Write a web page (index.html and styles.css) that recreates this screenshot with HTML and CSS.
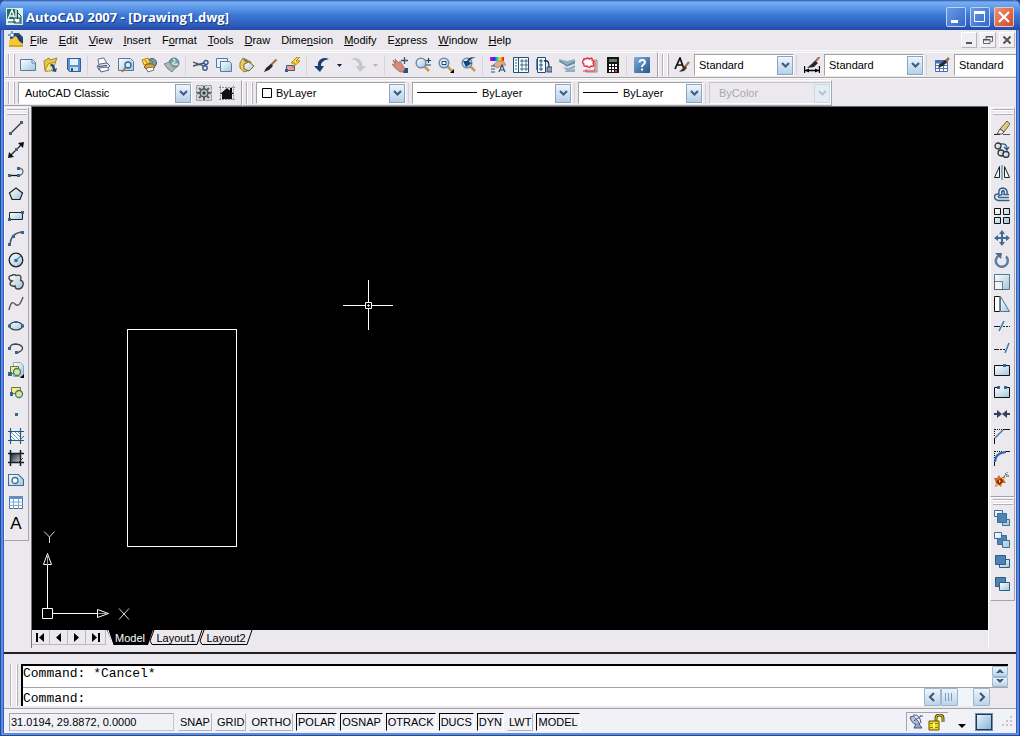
FILE: index.html
```html
<!DOCTYPE html>
<html lang="en">
<head>
<meta charset="utf-8">
<title>AutoCAD 2007 - [Drawing1.dwg]</title>
<link rel="stylesheet" href="styles.css">
</head>
<body>
<svg class="defs" aria-hidden="true">
  <defs>
    <linearGradient id="sky" x1="0" y1="0" x2="1" y2="1"><stop offset="0" stop-color="#fff"/><stop offset="1" stop-color="#9fc6dc"/></linearGradient>
    <linearGradient id="steel" x1="0" y1="0" x2="1" y2="1"><stop offset="0" stop-color="#7db0dc"/><stop offset="1" stop-color="#24548c"/></linearGradient>
    <linearGradient id="shade" x1="0" y1="0" x2="1" y2="1"><stop offset="0" stop-color="#10243c"/><stop offset="1" stop-color="#d8d4c0"/></linearGradient>
    <linearGradient id="rainbow"><stop offset="0" stop-color="#f0e"/><stop offset=".3" stop-color="#22f"/><stop offset=".5" stop-color="#0cc"/><stop offset=".7" stop-color="#ee0"/><stop offset="1" stop-color="#f00"/></linearGradient>
    <symbol id="chev" viewBox="0 0 9 7"><path d="M1 1l3.500 3.500L8 1" fill="none" stroke="currentColor" stroke-width="2.200"/></symbol>
    <symbol id="lens" viewBox="0 0 16 16"><path d="M9 9l5 5" stroke="#c69a50" stroke-width="2.500"/><circle cx="6" cy="6" r="4.800" fill="url(#sky)" stroke="#6b8cae" stroke-width="1.500"/></symbol>
    <symbol id="brush" viewBox="0 0 16 16"><path d="M14.500 2.500L8 9" stroke="#a76c4b" stroke-width="2.200"/><path d="M9 7l2 2-4 4-5 2 2-4z" fill="#26262c"/></symbol>
  </defs>
</svg>
<div class="window">
  <header class="titlebar">
    <svg class="app-icon" width="17" height="17" viewBox="0 0 17 17"><path d="M0 0h17v17H0z" fill="#d9efe9"/><path d="M1 1h10v10H1z" fill="#276c66"/><path d="M2 11l4-9 3 9M4 8h4M10 1v15M1 12.500h15" fill="none" stroke="#fff" stroke-width="1.300"/><path d="M11.500 2v9M2 14h8M8 10h6v5H8zM12 5l3 3v8" fill="none" stroke="#174b4a"/></svg>
    <h1>AutoCAD 2007 - [Drawing1.dwg]</h1>
    <div class="winbtns">
      <button aria-label="Minimize"><svg width="18" height="18"><path d="M4 12h7v3H4z" fill="#fff"/></svg></button>
      <button aria-label="Maximize"><svg width="18" height="18"><path d="M3.500 4.500h10v9h-10z" fill="none" stroke="#fff"/><path d="M3 3h11v3H3z" fill="#fff"/></svg></button>
      <button class="close" aria-label="Close"><svg width="18" height="18"><path d="M4 4l10 10M14 4L4 14" stroke="#fff" stroke-width="2.200"/></svg></button>
    </div>
  </header>

  <nav class="menubar">
    <svg class="doc-icon" width="16" height="17" viewBox="0 0 16 17"><path d="M2 2h9l4 4v4H2z" fill="#2f5186"/><path d="M1 16V9l7-4 7 8v3z" fill="#f0c934"/><path d="M8 4h3l4 5v4l-4-3z" fill="#223b6d"/><path d="M1 14h14v2H1z" fill="#d8a722"/><path d="M4 0v8M0 4h8" stroke="#23457a"/><path d="M2.500 2.500h3v3h-3z" fill="#fff" stroke="#7faadd"/></svg>
    <button><u>F</u>ile</button><button><u>E</u>dit</button><button><u>V</u>iew</button><button><u>I</u>nsert</button><button>F<u>o</u>rmat</button><button><u>T</u>ools</button><button><u>D</u>raw</button><button>Dime<u>n</u>sion</button><button><u>M</u>odify</button><button>E<u>x</u>press</button><button><u>W</u>indow</button><button><u>H</u>elp</button>
    <div class="mdibtns">
      <button aria-label="Minimize drawing"><svg width="14" height="14"><path d="M4 9h6v2H4z" fill="#555"/></svg></button>
      <button aria-label="Restore drawing"><svg width="14" height="14"><path d="M5 6V3.500h6.500v5H10M2.500 6.500H9v4H2.500z" fill="none" stroke="#666"/><path d="M5 3h7v1.500H5zM2 6h7v1.500H2z" fill="#555"/></svg></button>
      <button aria-label="Close drawing"><svg width="14" height="14"><path d="M3.500 3.500l7 7M10.500 3.500l-7 7" stroke="#555" stroke-width="2"/></svg></button>
    </div>
  </nav>

  <div class="toolrow">
    <div class="bar standard" role="toolbar" aria-label="Standard">
      <i class="grip"></i>
      <button aria-label="New"><svg viewBox="0 0 16 16"><path d="M.500 2.500h12l3 3v8H.500z" fill="url(#sky)" stroke="#527ca5"/><path d="M12 2.500V6h3.500" fill="#fff" stroke="#527ca5"/></svg></button>
      <button aria-label="Open"><svg viewBox="0 0 16 16"><path d="M1 4l5-3 1 2 7-2-2 5-7 8H2z" fill="#e9c64a" stroke="#a98527"/><path d="M5 7l8-2-5 9H2z" fill="#f8e78c" stroke="#b08e30"/><path d="M8 7c3 0 4 2 4 5l2-1-1 4-5-1 2-1c0-3-1-4-3-4z" fill="#224c7d"/></svg></button>
      <button aria-label="Save"><svg viewBox="0 0 16 16"><path d="M1.500 1.500h13v13h-11l-2-2z" fill="#5d93c9" stroke="#2b5f99"/><path d="M4 2h8v6H4z" fill="#e6f2fa"/><path d="M4 10h8v4H4z" fill="#c9dff0"/><path d="M5 11h2v3H5z" fill="#24517f"/></svg></button>
      <i class="sep"></i>
      <button aria-label="Plot"><svg viewBox="0 0 16 16"><path d="M4 8L3 2l6-1 3 6" fill="#fff" stroke="#60729d"/><path d="M2 9l3-2 7-1 3 3-3 3-8 1z" fill="#dfe6f4" stroke="#59658a"/><path d="M4 11l8-1 2 3-8 2z" fill="#fff" stroke="#59658a"/><path d="M3 9.500l9-1" stroke="#39446b"/></svg></button>
      <button aria-label="Plot Preview"><svg viewBox="0 0 16 16"><path d="M.500 1.500h12l3 3v9H.500z" fill="url(#sky)" stroke="#527ca5"/><path d="M8 10l-4 5" stroke="#a37943" stroke-width="2"/><circle cx="10" cy="8" r="3" fill="#d5ecf8" stroke="#3a6993" stroke-width="1.400"/></svg></button>
      <button aria-label="Publish"><svg viewBox="0 0 16 16"><circle cx="11" cy="6" r="4.500" fill="#6ca0ba" stroke="#376179"/><path d="M1 3l6-2 2 5-6 2z" fill="#ffe04a" stroke="#a8821b"/><path d="M3 10l3-3h6l2 3-3 3H6z" fill="#e4a735" stroke="#7d5b1c"/><path d="M5 11l7-1 1 3-6 2z" fill="#fff" stroke="#776"/><path d="M4 3l2 3M9 2l3 4" stroke="#d14c1e"/></svg></button>
      <button aria-label="3DDWF"><svg viewBox="0 0 16 16"><circle cx="10" cy="6" r="5" fill="#6f9fae" stroke="#557e91"/><path d="M9 2c3 1 2 3 0 4s3 2 5 1" stroke="#d6e6c8" stroke-width="1.500" fill="none"/><path d="M0 7l5-2 4 5 3 0-4 5-4-3z" fill="#aeb4b8" stroke="#7c888f"/></svg></button>
      <i class="sep"></i>
      <button aria-label="Cut"><svg viewBox="0 0 16 16"><path d="M0 5l11 4M0 9l11-3" stroke="#444a60" stroke-width="1.300"/><circle cx="13" cy="5.500" r="2" fill="none" stroke="#345a91" stroke-width="1.400"/><circle cx="12" cy="11" r="2.200" fill="none" stroke="#345a91" stroke-width="1.400"/></svg></button>
      <button aria-label="Copy"><svg viewBox="0 0 16 16"><path d="M.500 1.500h11v9H.500z" fill="#e5f3fa" stroke="#527ca5"/><path d="M4.500 4.500h9l2 2v8h-11z" fill="url(#sky)" stroke="#527ca5"/></svg></button>
      <button aria-label="Paste"><svg viewBox="0 0 16 16"><path d="M1 6l3-5 8 4-1 8-6 2-4-4z" fill="#e9cf62" stroke="#9c7b27"/><path d="M4 2h3l3 3H6z" fill="#777"/><path d="M5 7l5-2 5 4-5 5-5-2z" fill="url(#sky)" stroke="#80631d"/></svg></button>
      <button aria-label="Match Properties"><svg><use href="#brush"/></svg></button>
      <button aria-label="Block Editor"><svg viewBox="0 0 16 16"><path d="M1.500 8.500h8v5h-8z" fill="#f0a08a" stroke="#315d8d"/><path d="M12 0L6 6h4l-3 5 8-7h-4l4-4z" fill="#ffdf38" stroke="#a8821b"/><path d="M0 12h3v3H0z" fill="#2d609b"/></svg></button>
      <i class="sep"></i>
      <button aria-label="Undo"><svg viewBox="0 0 16 16"><path d="M15 2C8-1 3 4 4 9H0l6 6 4-6H7c0-4 3-6 8-7z" fill="#193e70"/></svg></button>
      <button class="drop" aria-label="Undo list"><svg viewBox="0 0 5 3"><path d="M0 0h5L2.500 3z" fill="#111b45"/></svg></button>
      <button aria-label="Redo"><svg viewBox="0 0 16 16"><path d="M1 2c7-3 12 2 11 7h4l-6 6-4-6h3c0-4-3-6-8-7z" fill="#c5c6cb"/></svg></button>
      <button class="drop" aria-label="Redo list"><svg viewBox="0 0 5 3"><path d="M0 0h5L2.500 3z" fill="#b6b5ba"/></svg></button>
      <i class="sep"></i>
      <button aria-label="Pan"><svg viewBox="0 0 16 16"><path d="M1 3l3 3-1-4 4 4 1-2 5 8-2 3H8L3 11 0 7l3 1z" fill="#d58c7e" stroke="#a25d56" stroke-width=".700"/><path d="M12.500 0v7M9 3.500h7" stroke="#34577f" stroke-width="1.300"/><path d="M13 11h3v5h-5z" fill="#27527f"/></svg></button>
      <button aria-label="Zoom Realtime"><svg viewBox="0 0 16 16"><use href="#lens"/><path d="M13.500 1v5M11 3.500h5M11 8h5" stroke="#193d70" stroke-width="1.200"/></svg></button>
      <button aria-label="Zoom Window"><svg viewBox="0 0 16 16"><use href="#lens"/><path d="M4 4.500h4v3H4z" fill="#fff" stroke="#1e4678"/><path d="M16 12v4h-4z" fill="#000"/></svg></button>
      <button aria-label="Zoom Previous"><svg viewBox="0 0 16 16"><use href="#lens"/><path d="M15 1C9-1 7 2 6 4L2 4l3 6 6-4-3-1c1-3 3-4 7-4z" fill="#1c426f"/></svg></button>
      <i class="sep"></i>
      <button aria-label="Properties"><svg viewBox="0 0 16 16"><path d="M0 0h14v4H0z" fill="url(#rainbow)"/><path d="M3 8l5-4 6 1 2 3-5 1-4 2z" fill="#e6a78e" stroke="#99604b" stroke-width=".600"/><path d="M1 9h4M1 12h4M1 15h4M9 15l3-7 3 7M10 13h4" fill="none" stroke="#31517b" stroke-width="1.200"/></svg></button>
      <button aria-label="DesignCenter"><svg viewBox="0 0 16 16"><path d="M.500.500h15v15H.500z" fill="#f5fafc" stroke="#244e78"/><path d="M5.500 0v16" stroke="#244e78"/><path d="M2 3h2M2 6h2M2 9h2M2 12h2" stroke="#2a6f91"/><path d="M8 3h2v2H8zM12 3h2v2h-2zM8 7h2v2H8zM12 7h2v2h-2zM8 11h2v2H8zM12 11h2v2h-2z" fill="#cfe4dd" stroke="#335b78" stroke-width=".800"/></svg></button>
      <button aria-label="Tool Palettes"><svg viewBox="0 0 16 16"><path d="M1.500.500h8v15h-8z" fill="#f5fafc" stroke="#244e78"/><path d="M0 2v11" stroke="#5588b5" stroke-width="2"/><path d="M4 3h2v2H4zM4 7h2v2H4zM4 11h2v2H4z" fill="#cfe4dd" stroke="#335b78"/><path d="M8 4c4-1 5 1 5 6" fill="none" stroke="#222d48" stroke-width="1.300"/><path d="M11 10h5v5h-5z" fill="#8da0b8" stroke="#3c4c66"/></svg></button>
      <button aria-label="Sheet Set Manager"><svg viewBox="0 0 16 16"><path d="M0 2l8 2 8-2v5l-7 2-9-4zM4 10l5 1 7-3v3l-8 3zM5 14l11-2v3H7z" fill="#92afbe"/><path d="M1 4l7 5 8-4" fill="none" stroke="#5c869b" stroke-width="1.500"/></svg></button>
      <button aria-label="Markup Set Manager"><svg viewBox="0 0 16 16"><path d="M4 3h11v12H4z" fill="#e4dede" stroke="#8b8992"/><path d="M1 1h11v11H1z" fill="#f8eeee"/><path d="M4 2q2-2 3 0 4-2 3 1 3 1 1 3 2 4-2 3-2 3-4 0-4 1-3-2-3-2 0-4-1-2 2-1z" fill="#fff" stroke="#df3045" stroke-width="1.400"/><path d="M1 14h12V4" fill="none" stroke="#cf3e50"/></svg></button>
      <button aria-label="QuickCalc"><svg viewBox="0 0 16 16"><path d="M2 0h12v16H2z" fill="#171414"/><path d="M4 2h8v3H4z" fill="#5e7b68"/><path d="M4 7h2v2H4zM7 7h2v2H7zM10 7h2v2h-2zM4 10h2v2H4zM7 10h2v2H7zM10 10h2v2h-2zM4 13h2v2H4zM7 13h2v2H7z" fill="#fff"/><path d="M10 13h2v2h-2z" fill="#c44"/></svg></button>
      <i class="sep"></i>
      <button aria-label="Help"><svg viewBox="0 0 16 16"><rect width="16" height="16" rx="1" fill="url(#steel)"/><path d="M5.500 5.500q0-2.500 2.700-2.500t2.700 2.300q0 1.200-1.500 2.200Q8 8.300 8 10M8 11.500v2" fill="none" stroke="#fff" stroke-width="2"/></svg></button>
    </div>
    <div class="bar open" role="toolbar" aria-label="Styles">
      <i class="grip"></i>
      <label class="lead" for="textstyle"><svg viewBox="0 0 16 16"><path d="M1 12L6 1l4 11M3 8h6" fill="none" stroke="#111" stroke-width="1.700"/><path d="M15 5l-5 6" stroke="#a76c4b" stroke-width="2"/><path d="M11 9l2 2-3 3-5 1 3-3z" fill="#333"/></svg></label>
      <span class="combo w-style"><select id="textstyle"><option>Standard</option></select><span class="arrow"><svg><use href="#chev"/></svg></span></span>
      <i class="sep"></i>
      <label class="lead" for="dimstyle"><svg viewBox="0 0 16 16"><path d="M15.500 0L10 6" stroke="#a76c4b" stroke-width="2.200"/><path d="M11 4l3 2-4 4-7 1z" fill="#26262c"/><path d="M.500 9v7M15.500 9v7M1 13.500h14" stroke="#000" stroke-width="1.300"/><path d="M1 13.500l4-2v4zM15 13.500l-4-2v4z"/></svg></label>
      <span class="combo w-style"><select id="dimstyle"><option>Standard</option></select><span class="arrow"><svg><use href="#chev"/></svg></span></span>
      <i class="sep"></i>
      <label class="lead" for="tablestyle"><svg viewBox="0 0 16 16"><path d="M1.500 3.500h12v11h-12z" fill="#fff" stroke="#4670b0"/><path d="M1 5h13" stroke="#4670b0" stroke-width="3"/><path d="M1 8.500h13M1 11.500h13M5.500 4v11M9.500 4v11" stroke="#4670b0"/><path d="M15 1l-4 4" stroke="#a76c4b" stroke-width="2.500"/><path d="M11 3l2 2-4 4-5 2 2-4z" fill="#26262c"/></svg></label>
      <span class="combo cut"><select id="tablestyle"><option>Standard</option></select></span>
    </div>
  </div>

  <div class="toolrow second">
    <div class="bar workspaces" role="toolbar" aria-label="Workspaces">
      <i class="grip"></i>
      <span class="combo w-space"><select aria-label="Workspace"><option>AutoCAD Classic</option></select><span class="arrow"><svg><use href="#chev"/></svg></span></span>
      <button aria-label="Workspace Settings"><svg viewBox="0 0 16 16"><path d="M.500.500h15v15H.500z" fill="#d4d6d6" stroke="#8b9091" stroke-dasharray="3 1"/><path d="M8 1v14M1 8h14M3 3l10 10M13 3L3 13" stroke="#5c6464" stroke-width="2"/><circle cx="8" cy="8" r="4" fill="#aeb6b6" stroke="#4f5959" stroke-width="1.500"/><circle cx="8" cy="8" r="1.500" fill="#303a3a"/></svg></button>
      <button aria-label="My Workspace"><svg viewBox="0 0 16 16"><path d="M1.500.500v15M14.500.500v15M0 2.500h16M0 14.500h16" stroke="#8c8c90" stroke-dasharray="2 1"/><path d="M1 9l7-6 7 6h-2v5H3V9z" fill="#111"/><path d="M11 3h2v4h-2z"/></svg></button>
    </div>
    <div class="bar" role="toolbar" aria-label="Properties">
      <i class="grip"></i>
      <span class="combo w-color"><svg class="swatch" width="10" height="10"><path d="M.500.500h9v9h-9z" fill="#fff" stroke="#000"/></svg><select class="after-swatch" aria-label="Color"><option>ByLayer</option></select><span class="arrow"><svg><use href="#chev"/></svg></span></span>
      <i class="sep"></i>
      <span class="combo w-linetype"><i class="stroke long"></i><select class="after-long" aria-label="Linetype"><option>ByLayer</option></select><span class="arrow"><svg><use href="#chev"/></svg></span></span>
      <i class="sep"></i>
      <span class="combo w-weight"><i class="stroke"></i><select class="after-line" aria-label="Lineweight"><option>ByLayer</option></select><span class="arrow"><svg><use href="#chev"/></svg></span></span>
      <i class="sep"></i>
      <span class="combo w-plot off"><select aria-label="Plot style" disabled><option>ByColor</option></select><span class="arrow"><svg><use href="#chev"/></svg></span></span>
    </div>
  </div>

  <main class="work">
    <aside class="side">
      <div class="vbar" role="toolbar" aria-label="Draw">
        <i class="hgrip"></i>
        <button aria-label="Line"><svg viewBox="0 0 16 16"><path d="M2 14L14 2" stroke="#333" stroke-width="1.300"/><path d="M1 12h3v3H1zM12 1h3v3h-3z" fill="#2e6892"/></svg></button>
        <button aria-label="Construction Line"><svg viewBox="0 0 16 16"><path d="M2 14L14 2" stroke="#222" stroke-width="1.300"/><path d="M0 16l1-6 5 5zM16 0l-1 6-5-5z" fill="#111"/><path d="M7 6h3v3H7z" fill="#2e6892"/></svg></button>
        <button aria-label="Polyline"><svg viewBox="0 0 16 16"><path d="M1 11.500h10q4-1 4-4T10 4" fill="none" stroke="#777" stroke-width="1.400"/><path d="M1 11.500h10" stroke="#111"/><path d="M0 10h3v3H0zM9 10h3v3H9zM9 3h3v3H9z" fill="#2e6892"/></svg></button>
        <button aria-label="Polygon"><svg viewBox="0 0 16 16"><path d="M8 2l6.500 5L12 13.500H4L1.500 7z" fill="url(#sky)" stroke="#222" stroke-width="1.200"/></svg></button>
        <button aria-label="Rectangle"><svg viewBox="0 0 16 16"><path d="M1.500 4.500h13v7h-13z" fill="url(#sky)" stroke="#222"/><path d="M0 10h3v3H0zM13 3h3v3h-3z" fill="#2e6892"/></svg></button>
        <button aria-label="Arc"><svg viewBox="0 0 16 16"><path d="M2 14Q3 3 14 2" fill="none" stroke="#555" stroke-width="1.400"/><path d="M0 13h3v3H0zM4 5h3v3H4zM13 1h3v3h-3z" fill="#2e6892"/></svg></button>
        <button aria-label="Circle"><svg viewBox="0 0 16 16"><circle cx="8" cy="8" r="6.800" fill="url(#sky)" stroke="#222" stroke-width="1.300"/><path d="M8 8l5-4" stroke="#28608b"/><path d="M6.500 7h3v3h-3z" fill="#2e6892"/></svg></button>
        <button aria-label="Revision Cloud"><svg viewBox="0 0 16 16"><path d="M4 7C0 6 0 1 4 1.500q2-2 4 0Q13 0 13 4q0 2-1 2 4 1 3 5-1 4-5 4-3 0-3-3-4 1-5-2 0-2 2-3z" fill="url(#sky)" stroke="#444" stroke-width="1.400"/></svg></button>
        <button aria-label="Spline"><svg viewBox="0 0 16 16"><path d="M1 14C3 5 5 6 7 8c4 4 6-2 8-7" fill="none" stroke="#555" stroke-width="1.400"/></svg></button>
        <button aria-label="Ellipse"><svg viewBox="0 0 16 16"><ellipse cx="8" cy="8" rx="6.500" ry="4" fill="url(#sky)" stroke="#333" stroke-width="1.200"/><path d="M0 6.500h3v3H0zM13 6.500h3v3h-3zM6.500 3h3v2h-3z" fill="#2e6892"/></svg></button>
        <button aria-label="Ellipse Arc"><svg viewBox="0 0 16 16"><path d="M2 8q0-4 6-4 7 1 6.500 5Q13 12 8 13" fill="none" stroke="#444" stroke-width="1.300"/><path d="M0 7h3v3H0zM7 11h3v3H7z" fill="#2e6892"/></svg></button>
        <button aria-label="Insert Block"><svg viewBox="0 0 16 16"><path d="M5.500.500h7l3 3v11h-10z" fill="url(#sky)" stroke="#8ba9bc"/><path d="M2.500 4.500h8v7h-8z" fill="#f5eb8d" stroke="#6c7346"/><circle cx="9" cy="10" r="3.500" fill="#d7e693" stroke="#4c7770" stroke-width="1.300"/><path d="M0 10h4v4H0z" fill="#2e6892"/><path d="M16 12v4h-4z"/></svg></button>
        <button aria-label="Make Block"><svg viewBox="0 0 16 16"><path d="M3.500 3.500h9v6h-9z" fill="#f5eb8d" stroke="#6c7346"/><circle cx="11" cy="10" r="3.500" fill="#d7e693" stroke="#4c7770" stroke-width="1.300"/><path d="M2 8h3v4H2z" fill="#2e6892"/></svg></button>
        <button aria-label="Point"><svg viewBox="0 0 16 16"><path d="M7 7h3v3H7z" fill="#35678f"/></svg></button>
        <button aria-label="Hatch"><svg viewBox="0 0 16 16"><path d="M3 3h10v10H3z" fill="#fff"/><path d="M3 4l9 9M6 3l7 7M9 3l4 4M3 8l5 5M3 11l2 2" stroke="#58a1bf"/><path d="M2.500 0v16M12.500 0v16M0 3.500h16M0 12.500h16" stroke="#285879" stroke-width="1.200"/><path d="M11 13l5-5" stroke="#35678f"/></svg></button>
        <button aria-label="Gradient"><svg viewBox="0 0 16 16"><path d="M3 3h10v10H3z" fill="url(#shade)"/><path d="M2.500 0v16M12.500 0v16M0 3.500h16M0 12.500h16" stroke="#101d2b" stroke-width="1.500"/><path d="M10 13l5-5" stroke="#333"/></svg></button>
        <button aria-label="Region"><svg viewBox="0 0 16 16"><path d="M.500 2.500h10l5 5v6H.500z" fill="url(#sky)" stroke="#3d7098" stroke-width="1.200"/><circle cx="7" cy="8.500" r="3" fill="#fff" stroke="#427297" stroke-width="1.300"/></svg></button>
        <button aria-label="Table"><svg viewBox="0 0 16 16"><path d="M1.500 2.500h13v12h-13z" fill="#fff" stroke="#416fa7"/><path d="M1 3.500h14" stroke="#5b91c8" stroke-width="3"/><path d="M1 8h14M1 11.500h14M5.500 4v11M10.500 4v11" stroke="#7da7d3"/></svg></button>
        <button class="letter" aria-label="Multiline Text">A</button>
      </div>
    </aside>

    <section class="drawing">
      <div class="canvas">
        <div class="shape"></div>
        <svg class="cross" width="51" height="51"><path d="M25.500 0v22M25.500 29v21M0 25.500h22M29 25.500h21" stroke="#fff"/><path d="M22.500 22.500h6v6h-6z" fill="none" stroke="#fff"/><path d="M25.500 24v3M24 25.500h3" stroke="#ccc"/></svg>
        <svg class="ucs" width="100" height="106" fill="none" stroke="#fff"><path d="M10.500 84.500h10v10h-10zM15.500 84V41M21 89.500h44"/><path d="M15.500 29.500l4 11h-8zM76.500 89.500l-11-4v8z"/><path d="M15.500 32v9M66 89.500h8" stroke="#999"/><path d="M12 7.500l5.500 5.500 5-5.500M17.500 13v6M87 84.500l10 11M97 84.500l-10 11" stroke="#ddd"/></svg>
      </div>
      <div class="tabs">
        <div class="tabnav">
          <button aria-label="First"><svg width="9" height="9"><path d="M1 0v9" stroke="#000" stroke-width="2"/><path d="M8 0v9L3 4.500z"/></svg></button>
          <button aria-label="Previous"><svg width="9" height="9"><path d="M7 0v9L2 4.500z"/></svg></button>
          <button aria-label="Next"><svg width="9" height="9"><path d="M2 0v9l5-4.500z"/></svg></button>
          <button aria-label="Last"><svg width="9" height="9"><path d="M1 0v9l5-4.500z"/><path d="M8 0v9" stroke="#000" stroke-width="2"/></svg></button>
        </div>
        <button class="tab active"><svg viewBox="0 0 46 15" preserveAspectRatio="none"><path d="M0 0h46l-5 15H6z"/><path d="M1 0l5 15" stroke="#fff"/></svg><span>Model</span></button>
        <button class="tab"><svg viewBox="0 0 54 15" preserveAspectRatio="none"><path d="M5 0L1 11l2 3.500h45L53 0" fill="#ebe9ed" stroke="#000"/></svg><span>Layout1</span></button>
        <button class="tab"><svg viewBox="0 0 54 15" preserveAspectRatio="none"><path d="M5 0L1 11l2 3.500h45L53 0" fill="#ebe9ed" stroke="#000"/></svg><span>Layout2</span></button>
      </div>
    </section>

    <aside class="side right">
      <div class="vbar" role="toolbar" aria-label="Modify">
        <i class="hgrip"></i>
        <button aria-label="Erase"><svg viewBox="0 0 16 16"><path d="M0 14.500h6" stroke="#222"/><path d="M6 9l7-8 3 3-6 8z" fill="#d9c88d" stroke="#7b6331"/><path d="M6 9l4 3-2 2H3z" fill="#f4f0e4" stroke="#555"/><path d="M9 14.500h7" stroke="#555"/></svg></button>
        <button aria-label="Copy Object"><svg viewBox="0 0 16 16"><circle cx="4" cy="4" r="3" fill="url(#sky)" stroke="#333" stroke-width="1.300"/><circle cx="7" cy="11" r="3" fill="url(#sky)" stroke="#333" stroke-width="1.300"/><circle cx="12" cy="12.500" r="3" fill="url(#sky)" stroke="#333" stroke-width="1.300"/><path d="M7 2q6-1 6 5M10 5l3 3 2-3" fill="none" stroke="#24598a" stroke-width="1.300"/></svg></button>
        <button aria-label="Mirror"><svg viewBox="0 0 16 16"><path d="M8 1v15" stroke="#2475a7"/><path d="M5.500 2.500v11h-5zM10.500 2.500v11h5z" fill="#eef5f8" stroke="#222"/></svg></button>
        <button aria-label="Offset"><svg viewBox="0 0 16 16"><path d="M15.500 14.500H4q-4-1-3.500-4T5 8q-1-6 4-6 5 1 4 6" fill="none" stroke="#315f86" stroke-width="1.400"/><path d="M15 11.500H6q-3 0-1-2l3-1q-1-3 1-4 2 1 1 4h5" fill="none" stroke="#369" stroke-width="1.400"/></svg></button>
        <button aria-label="Array"><svg viewBox="0 0 16 16" fill="url(#sky)" stroke="#111"><path d="M.500.500h6v6h-6zM9.500.500h6v6h-6zM.500 9.500h6v6h-6zM9.500 9.500h6v6h-6z"/></svg></button>
        <button aria-label="Move"><svg viewBox="0 0 16 16"><path d="M8 2v12M2 8h12" stroke="#426b95" stroke-width="2"/><path d="M8 0l3 4H5zM8 16l3-4H5zM0 8l4-3v6zM16 8l-4-3v6z" fill="#426b95"/></svg></button>
        <button aria-label="Rotate"><svg viewBox="0 0 16 16"><path d="M5 3.500a6 6 0 1 0 7 1" fill="none" stroke="#5b7f9e" stroke-width="2.500"/><path d="M1 1h7L7 7z" fill="#496f93"/></svg></button>
        <button aria-label="Scale"><svg viewBox="0 0 16 16"><path d="M.500.500h15v15H.500z" fill="url(#sky)" stroke="#527895"/><path d="M.500 7.500h8v8h-8z" fill="#eef5f8" stroke="#111" stroke-dasharray="1 1"/></svg></button>
        <button aria-label="Stretch"><svg viewBox="0 0 16 16"><path d="M6.500.500l9 15h-9z" fill="url(#sky)" stroke="#4b7795"/><path d="M5.500.500h-5v15h5" fill="#fff" stroke="#111"/><path d="M5.500.500v15" stroke="#111" stroke-dasharray="1 1"/></svg></button>
        <button aria-label="Trim"><svg viewBox="0 0 16 16"><path d="M0 8.500h6" stroke="#222"/><path d="M9 8.500h7" stroke="#222" stroke-dasharray="2 1"/><path d="M5 13l5-10" stroke="#397aae" stroke-width="1.500"/></svg></button>
        <button aria-label="Extend"><svg viewBox="0 0 16 16"><path d="M0 9.500h5" stroke="#222"/><path d="M6 9.500h6" stroke="#222" stroke-dasharray="2 1"/><path d="M11 13l4-10" stroke="#397aae" stroke-width="1.500"/></svg></button>
        <button aria-label="Break at Point"><svg viewBox="0 0 16 16"><path d="M.500 3.500h15v10H.500z" fill="url(#sky)" stroke="#111"/><path d="M9 2h3v3H9z" fill="#35678f"/></svg></button>
        <button aria-label="Break"><svg viewBox="0 0 16 16"><path d="M.500 3.500h15v10H.500z" fill="url(#sky)"/><path d="M4 3.500H.500v10h15v-10H12" fill="none" stroke="#111"/><path d="M3 2h3v3H3zM10 2h3v3h-3z" fill="#35678f"/></svg></button>
        <button aria-label="Join"><svg viewBox="0 0 16 16"><path d="M0 8h5M11 8h5" stroke="#34405a" stroke-width="2"/><path d="M3 4l5 4-5 4zM13 4L8 8l5 4z" fill="#34405a"/></svg></button>
        <button aria-label="Chamfer"><svg viewBox="0 0 16 16"><path d="M.500 10v6M9 1.500h7" stroke="#111"/><path d="M.500 1v8M1 1.500h8" stroke="#111" stroke-dasharray="1 1"/><path d="M1 10l8-8" stroke="#3c78b2" stroke-width="1.500"/></svg></button>
        <button aria-label="Fillet"><svg viewBox="0 0 16 16"><path d="M.500 10v6M11 1.500h5" stroke="#111"/><path d="M.500 1v8M1 1.500h8" stroke="#111" stroke-dasharray="1 1"/><path d="M1 12q0-9 11-10" fill="none" stroke="#2866b6" stroke-width="2"/></svg></button>
        <button aria-label="Explode"><svg viewBox="0 0 16 16"><path d="M0 6l3 0 2-3 2 3 4-2-1 4 2 3-4 0-1 4-2-2-4 2 1-4z" fill="#d46b22"/><path d="M2 9l3-1 3-2 1 4-4 3z" fill="#8b2a18"/><path d="M5 8l2 1-2 2zM8 6l2 0-1 2zM2 12l2 0-1 2z" fill="#ffe75c"/><path d="M9 6l3-4M11 1l4 4M10 4h6M13 0v6" stroke="#555" stroke-dasharray="1 1"/></svg></button>
      </div>
      <div class="vbar" role="toolbar" aria-label="Draw Order">
        <i class="hgrip"></i>
        <button aria-label="Bring to Front"><svg viewBox="0 0 16 16" stroke="#3e6d96"><path d="M.500.500h8v6h-8zM8.500 9.500h7v6h-7z" fill="url(#sky)"/><path d="M3.500 3.500h9v9h-9z" fill="#4e83b5"/></svg></button>
        <button aria-label="Send to Back"><svg viewBox="0 0 16 16" stroke="#3e6d96"><path d="M3.500 3.500h9v9h-9z" fill="#4e83b5"/><path d="M.500.500h7v6h-7zM8.500 8.500h7v7h-7z" fill="url(#sky)"/></svg></button>
        <button aria-label="Bring Above Objects"><svg viewBox="0 0 16 16" stroke="#2f5b84"><path d="M5.500 5.500h10v8h-10z" fill="url(#sky)"/><path d="M1.500 1.500h10v9h-10z" fill="#4e83b5"/></svg></button>
        <button aria-label="Send Under Objects"><svg viewBox="0 0 16 16" stroke="#2f5b84"><path d="M1.500 1.500h10v9h-10z" fill="#4e83b5"/><path d="M5.500 6.500h10v8h-10z" fill="url(#sky)"/></svg></button>
      </div>
    </aside>
  </main>

  <section class="command">
    <i class="grip"></i>
    <div class="console">
      <div class="history"><output>Command: *Cancel*</output>
        <div class="vscroll"><button aria-label="Scroll up"><svg width="8" height="5"><path d="M4 0l4 4H5L4 3 3 4H0z" fill="#43546a"/></svg></button><button aria-label="Scroll down"><svg width="8" height="5"><path d="M4 4l4-4H5L4 1 3 0H0z" fill="#43546a"/></svg></button></div>
      </div>
      <div class="entry"><input aria-label="Command line" value="Command:">
        <div class="hscroll"><button aria-label="Scroll left"><svg width="9" height="10"><path d="M6 1L2 5l4 4" fill="none" stroke="#43546a" stroke-width="2"/></svg></button><button aria-label="Thumb"><svg width="9" height="8"><path d="M.500 0v8M3.500 0v8M6.500 0v8" stroke="#7b9dc0"/></svg></button><i></i><button aria-label="Scroll right"><svg width="9" height="10"><path d="M3 1l4 4-4 4" fill="none" stroke="#43546a" stroke-width="2"/></svg></button></div>
      </div>
    </div>
  </section>

  <footer class="status">
    <span class="coords">31.0194, 29.8872, 0.0000</span>
    <button>SNAP</button><button>GRID</button><button>ORTHO</button><button class="on">POLAR</button><button class="on">OSNAP</button><button class="on">OTRACK</button><button class="on">DUCS</button><button class="on">DYN</button><button>LWT</button><button class="on">MODEL</button>
    <div class="tray">
      <div class="trayicons">
        <svg width="16" height="16" viewBox="0 0 16 16"><path d="M1 3q2 9 10 7L5 2z" fill="#b9c2df" stroke="#46527f"/><path d="M4 1q7-1 8 8" fill="#eef" stroke="#46527f"/><path d="M5 7l7-5M11 2h3M7 10l-2 4h8l-3-4" fill="#9ba7ce" stroke="#46527f"/></svg>
        <svg width="18" height="17" viewBox="0 0 18 17"><path d="M8 8V4q0-3 3.500-3T15 4v4" fill="none" stroke="#5f5600" stroke-width="3"/><path d="M8 8V4q0-3 3.500-3T15 4v4" fill="none" stroke="#e2cb22"/><path d="M1 7h10v9H1z" fill="#f0da1d" stroke="#5c5300"/><path d="M2 9.500h8M2 13.500h8" stroke="#8a7d00"/><path d="M5 9h2v5H5z" fill="#fff17c"/></svg>
      </div>
      <svg class="menuarrow" width="8" height="4"><path d="M0 0h8L4 4z"/></svg>
      <button class="clean" aria-label="Clean Screen"></button>
      <svg width="12" height="12" fill="#c9c4c0"><path d="M8 0h2v2H8zM8 4h2v2H8zM8 8h2v2H8zM4 4h2v2H4zM4 8h2v2H4zM0 8h2v2H0z"/></svg>
    </div>
  </footer>
</div>
</body>
</html>
```
FILE: styles.css
```css
* { box-sizing: border-box; }
body { margin: 0; background: #2b4f9e; color: #000; font: 11px/14px "Liberation Sans", Arial, sans-serif; }
button, input, select { font: inherit; color: inherit; margin: 0; padding: 0; border: 0; background: none; border-radius: 0; }
svg { display: block; flex: none; }
i { display: block; flex: none; }
.defs { position: absolute; width: 0; height: 0; }

.window { display: flex; flex-direction: column; min-height: 100vh; padding: 0 4px 3px; border-radius: 7px 7px 0 0; background: #ebe9ed; box-shadow: inset 1px 0 #244a9c, inset -1px -1px #244a9c, inset 3px 0 #5b8be2, inset -3px -3px #5b8be2, inset 4px 0 #2f5ec4, inset -4px -4px #2f5ec4; }

.titlebar { display: flex; align-items: center; gap: 3px; height: 30px; margin: 0 -4px; padding: 3px 6px 0; border-radius: 7px 7px 0 0; background: linear-gradient(#2b57a8 0, #78aef2 7%, #5f9aea 25%, #3b78d4 50%, #3369c8 70%, #2c58b8 88%, #2349a6); }
h1 { flex: 1; margin: 0; color: #fff; font: bold 13px/18px "Open Sans", "Noto Sans", sans-serif; text-shadow: 1px 1px #17387f; }
.winbtns { display: flex; gap: 4px; }
.winbtns button { width: 20px; height: 20px; border: 1px solid #bcd3f6; border-radius: 2px; background: linear-gradient(135deg, #6b9be6, #3168cb); }
.winbtns .close { border-color: #f0c6ba; background: linear-gradient(135deg, #ee9375, #cf4a26); }

.menubar { display: flex; align-items: center; gap: 1px; height: 20px; padding: 0 1px 1px 4px; }
.menubar > button { padding: 0 5px; line-height: 16px; }
.mdibtns { display: flex; gap: 3px; margin-left: auto; }
.mdibtns button { width: 16px; height: 16px; border: 1px solid; border-color: #fff #b8b6bb #b8b6bb #fff; background: #f1eff2; }

.toolrow { display: flex; height: 28px; padding-top: 1px; border-top: 1px solid #fafafa; overflow: hidden; }
.bar { display: flex; align-items: center; height: 26px; padding-left: 3px; border: 1px solid; border-color: #fafafa #a5a3a8 #a5a3a8 #fafafa; flex: none; }
.bar.standard { padding-right: 4px; }
.bar.workspaces { padding-right: 3px; }
.bar.open { flex: 1; border-right: 0; }
.bar button { display: flex; align-items: center; justify-content: center; width: 23px; height: 22px; }
.bar button svg, .lead svg { width: 16px; height: 16px; }
.bar .drop { width: 13px; }
.bar .drop svg { width: 5px; height: 3px; }
.grip { width: 7px; height: 22px; margin-right: 1px; border: solid #b3b1b6; border-width: 0 1px; box-shadow: inset 1px 0 #fff, inset -1px 0 #fff; }
.sep { width: 6px; height: 20px; background: linear-gradient(90deg, #0000 2px, #d6d4d8 2px, #d6d4d8 3px, #0000 3px); }
.lead { display: flex; justify-content: center; width: 24px; }
.second .grip { margin-right: 3px; }

.combo { position: relative; display: flex; height: 22px; border: 1px solid #a5a3a8; border-right-color: #fff; border-bottom-color: #fff; background: #fff; }
.combo select { width: 100%; height: 20px; padding-left: 4px; appearance: none; background: none; outline: 0; opacity: 1; }
.arrow { position: absolute; top: 1px; right: 0; display: flex; align-items: center; justify-content: center; width: 16px; height: 19px; border: 1px solid #8ba5c0; background: linear-gradient(#eef5fd, #b5d0ea); color: #405d84; pointer-events: none; }
.arrow svg { width: 9px; height: 7px; }
.w-style { width: 100px; }
.cut { flex: 1; border-right: 0; min-width: 60px; }
.w-space { width: 174px; }
.w-space select { padding-left: 6px; }
.w-color { width: 150px; }
.w-linetype { width: 160px; }
.w-weight { width: 125px; }
.w-plot { width: 122px; }
.off { border-color: #c9c7cc #fff #fff #c9c7cc; background: #ebe9ed; color: #aaa8ad; }
.off select { padding-left: 9px; }
.off .arrow { border-color: #c9d9e6; background: #e3edf5; color: #b5c4d4; }
.swatch { position: absolute; left: 5px; top: 5px; }
.combo .after-swatch { padding-left: 19px; }
.combo .after-long { padding-left: 69px; }
.combo .after-line { padding-left: 44px; }
.stroke { position: absolute; left: 4px; top: 9px; width: 35px; height: 1px; background: #000; }
.stroke.long { width: 60px; }

.work { display: flex; flex: 1; min-height: 0; }
.side { flex: none; width: 27px; padding-top: 1px; }
.right { width: 28px; padding-left: 1px; border-left: 1px solid #fff; }
.vbar { width: 25px; padding: 1px 0 5px; border: 1px solid; border-color: #fafafa #a5a3a8 #a5a3a8 #fafafa; }
.hgrip { width: 20px; height: 6px; margin: 0 auto 2px; border: solid #b3b1b6; border-width: 1px 0; box-shadow: inset 0 1px #fff, inset 0 -1px #fff; }
.vbar button { display: flex; align-items: center; justify-content: center; width: 22px; height: 22px; }
.vbar svg { width: 16px; height: 16px; }
.vbar .letter { font: 17px/22px "Liberation Sans", Arial, sans-serif; }

.drawing { display: flex; flex: 1; flex-direction: column; min-width: 0; border-left: 1px solid #77757a; }
.canvas { position: relative; flex: 1; min-height: 440px; border-top: 1px solid #66646a; background: #000; overflow: hidden; }
.shape { position: absolute; left: 95px; top: 222px; width: 110px; height: 218px; border: 1px solid #fff; }
.cross { position: absolute; left: 311px; top: 173px; }
.ucs { position: absolute; left: 0; bottom: 0; }
.tabs { display: flex; height: 18px; padding-bottom: 2px; }
.tabnav { display: flex; }
.tabnav button { display: flex; align-items: center; justify-content: center; width: 18px; height: 15px; border-right: 1px solid #bbb9be; border-bottom: 1px solid #bbb9be; }
.tabnav button:last-child { width: 20px; }
.tab { position: relative; width: 54px; height: 15px; margin-left: -4px; }
.tab svg { position: absolute; left: 0; top: 0; width: 100%; height: 15px; }
.tab span { position: relative; }
.tab.active { width: 46px; margin-left: 1px; color: #fff; }

.command { display: flex; gap: 3px; margin-top: 4px; padding: 10px 8px 2px 6px; border-top: 2px solid #222; }
.command .grip { width: 8px; height: auto; margin: 0; }
.console { flex: 1; border: solid #000; border-width: 2px 0 0 2px; font: 13px/16px "Liberation Mono", "Courier New", monospace; }
.history { display: flex; height: 22px; border-bottom: 1px solid #a5a3a8; background: #fff; }
.history output { flex: 1; }
.vscroll { display: flex; flex-direction: column; width: 16px; }
.vscroll button { display: flex; flex: 1; align-items: center; justify-content: center; }
.vscroll button, .hscroll button { border: 1px solid #9db6cf; border-radius: 1px; background: linear-gradient(#edf5fc, #b9d3ea); }
.entry { display: flex; height: 18px; padding-right: 18px; }
.entry input { flex: 1; min-width: 0; height: 18px; padding-top: 2px; background: #fff; outline: 0; }
.hscroll { display: flex; width: 66px; background: #f0f5fb; }
.hscroll button { display: flex; align-items: center; justify-content: center; width: 17px; height: 18px; }
.hscroll i { flex: 1; }

.status { display: flex; align-items: center; gap: 3px; height: 25px; padding: 1px 2px 0 5px; border-top: 1px solid #a5a3a8; background: #f1f2f8; }
.coords { width: 165px; height: 18px; margin-right: 1px; padding: 1px; line-height: 15px; border: 1px solid; border-color: #a5a3a8 #c5c4ca #c5c4ca #a5a3a8; }
.status > button { height: 18px; padding: 0 1px; line-height: 17px; border: 1px solid; border-color: #f1f2f8 #b5b4ba #b5b4ba #f1f2f8; }
.status > .on { border-color: #000 #fff #fff #000; }
.tray { display: flex; align-items: center; gap: 10px; margin-left: auto; }
.trayicons { display: flex; gap: 3px; padding: 1px 2px 0; border: solid #a5a3a8; border-width: 1px 0 0 1px; }
.menuarrow { margin-top: 8px; }
.clean { width: 16px; height: 16px; border: 1px solid #173a60; background: linear-gradient(135deg, #e6f2fa, #8ab4d4); outline: 1px solid #6d90ae; }
```
